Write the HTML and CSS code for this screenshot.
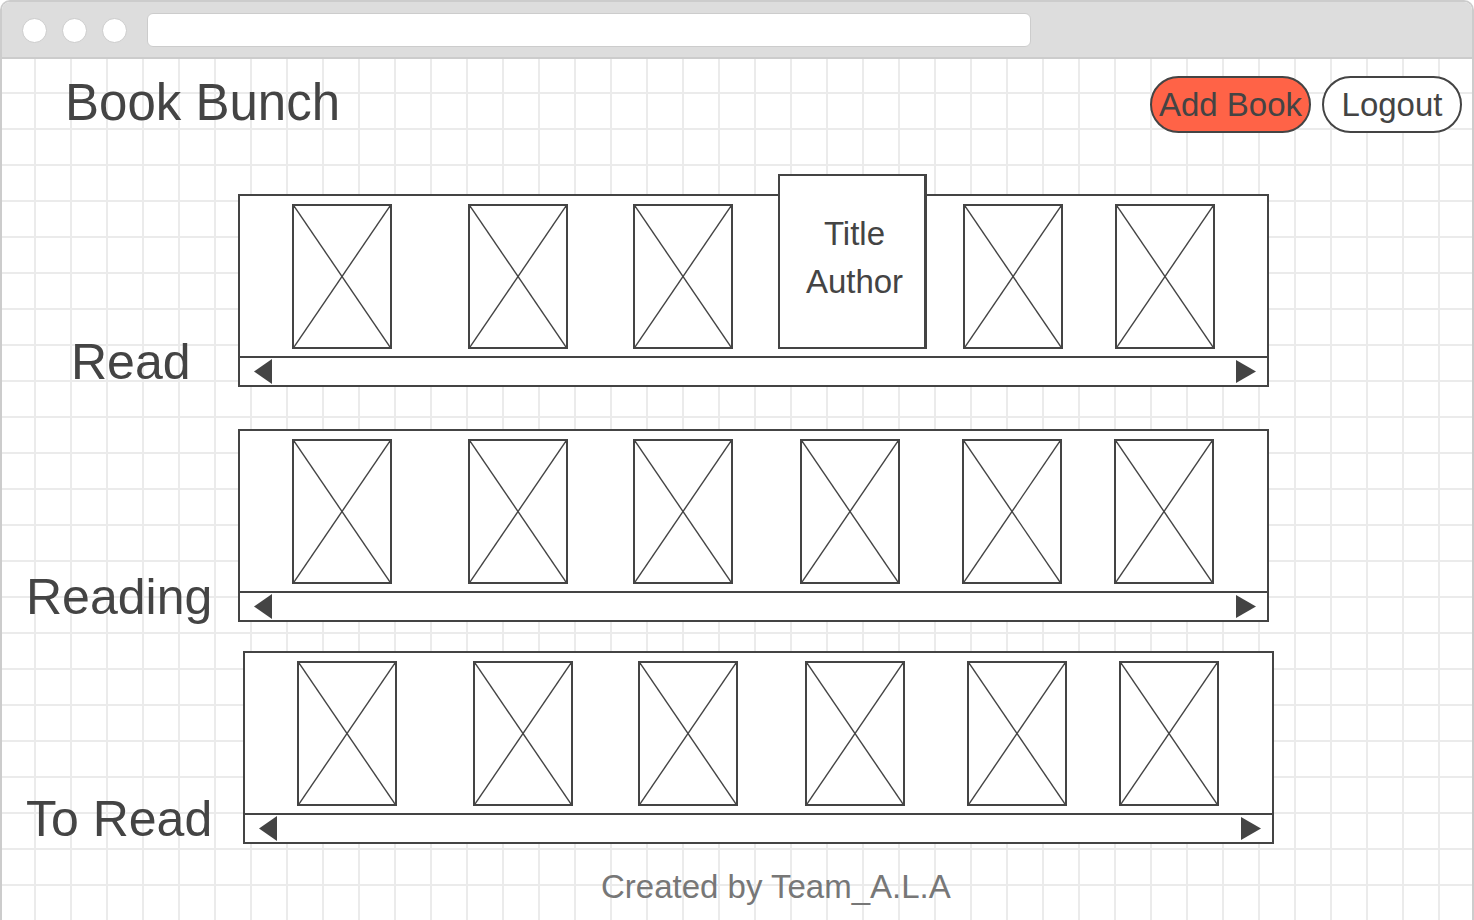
FILE: index.html
```html
<!DOCTYPE html>
<html lang="en">
<head>
<meta charset="utf-8">
<title>Book Bunch</title>
<link rel="stylesheet" href="styles.css">
</head>
<body>
<div class="window">
  <div class="titlebar">
    <span class="dot"></span>
    <span class="dot"></span>
    <span class="dot"></span>
    <div class="address"></div>
  </div>
  <div class="page">
    <header class="header">
      <h1 class="brand">Book Bunch</h1>
      <div class="actions">
        <button class="btn btn-add">Add Book</button>
        <button class="btn btn-logout">Logout</button>
      </div>
    </header>

    <main class="shelves">
      <section class="shelf shelf-read">
        <h2 class="shelf-label">Read</h2>
        <div class="shelf-box">
          <div class="shelf-items">
            <div class="cover"><svg viewBox="0 0 96 141" preserveAspectRatio="none"><line x1="0" y1="0" x2="96" y2="141"/><line x1="96" y1="0" x2="0" y2="141"/></svg></div>
            <div class="cover"><svg viewBox="0 0 96 141" preserveAspectRatio="none"><line x1="0" y1="0" x2="96" y2="141"/><line x1="96" y1="0" x2="0" y2="141"/></svg></div>
            <div class="cover"><svg viewBox="0 0 96 141" preserveAspectRatio="none"><line x1="0" y1="0" x2="96" y2="141"/><line x1="96" y1="0" x2="0" y2="141"/></svg></div>
            <div class="book-card"><span>Title</span><span>Author</span></div>
            <div class="cover"><svg viewBox="0 0 96 141" preserveAspectRatio="none"><line x1="0" y1="0" x2="96" y2="141"/><line x1="96" y1="0" x2="0" y2="141"/></svg></div>
            <div class="cover"><svg viewBox="0 0 96 141" preserveAspectRatio="none"><line x1="0" y1="0" x2="96" y2="141"/><line x1="96" y1="0" x2="0" y2="141"/></svg></div>
          </div>
          <div class="scrollbar">
            <svg class="arrow arrow-left" viewBox="0 0 18 25"><polygon points="18,0 0,12.5 18,25"/></svg>
            <svg class="arrow arrow-right" viewBox="0 0 20 23"><polygon points="0,0 20,11.5 0,23"/></svg>
          </div>
        </div>
      </section>

      <section class="shelf shelf-reading">
        <h2 class="shelf-label">Reading</h2>
        <div class="shelf-box">
          <div class="shelf-items">
            <div class="cover"><svg viewBox="0 0 96 141" preserveAspectRatio="none"><line x1="0" y1="0" x2="96" y2="141"/><line x1="96" y1="0" x2="0" y2="141"/></svg></div>
            <div class="cover"><svg viewBox="0 0 96 141" preserveAspectRatio="none"><line x1="0" y1="0" x2="96" y2="141"/><line x1="96" y1="0" x2="0" y2="141"/></svg></div>
            <div class="cover"><svg viewBox="0 0 96 141" preserveAspectRatio="none"><line x1="0" y1="0" x2="96" y2="141"/><line x1="96" y1="0" x2="0" y2="141"/></svg></div>
            <div class="cover"><svg viewBox="0 0 96 141" preserveAspectRatio="none"><line x1="0" y1="0" x2="96" y2="141"/><line x1="96" y1="0" x2="0" y2="141"/></svg></div>
            <div class="cover"><svg viewBox="0 0 96 141" preserveAspectRatio="none"><line x1="0" y1="0" x2="96" y2="141"/><line x1="96" y1="0" x2="0" y2="141"/></svg></div>
            <div class="cover"><svg viewBox="0 0 96 141" preserveAspectRatio="none"><line x1="0" y1="0" x2="96" y2="141"/><line x1="96" y1="0" x2="0" y2="141"/></svg></div>
          </div>
          <div class="scrollbar">
            <svg class="arrow arrow-left" viewBox="0 0 18 25"><polygon points="18,0 0,12.5 18,25"/></svg>
            <svg class="arrow arrow-right" viewBox="0 0 20 23"><polygon points="0,0 20,11.5 0,23"/></svg>
          </div>
        </div>
      </section>

      <section class="shelf shelf-toread">
        <h2 class="shelf-label">To Read</h2>
        <div class="shelf-box">
          <div class="shelf-items">
            <div class="cover"><svg viewBox="0 0 96 141" preserveAspectRatio="none"><line x1="0" y1="0" x2="96" y2="141"/><line x1="96" y1="0" x2="0" y2="141"/></svg></div>
            <div class="cover"><svg viewBox="0 0 96 141" preserveAspectRatio="none"><line x1="0" y1="0" x2="96" y2="141"/><line x1="96" y1="0" x2="0" y2="141"/></svg></div>
            <div class="cover"><svg viewBox="0 0 96 141" preserveAspectRatio="none"><line x1="0" y1="0" x2="96" y2="141"/><line x1="96" y1="0" x2="0" y2="141"/></svg></div>
            <div class="cover"><svg viewBox="0 0 96 141" preserveAspectRatio="none"><line x1="0" y1="0" x2="96" y2="141"/><line x1="96" y1="0" x2="0" y2="141"/></svg></div>
            <div class="cover"><svg viewBox="0 0 96 141" preserveAspectRatio="none"><line x1="0" y1="0" x2="96" y2="141"/><line x1="96" y1="0" x2="0" y2="141"/></svg></div>
            <div class="cover"><svg viewBox="0 0 96 141" preserveAspectRatio="none"><line x1="0" y1="0" x2="96" y2="141"/><line x1="96" y1="0" x2="0" y2="141"/></svg></div>
          </div>
          <div class="scrollbar">
            <svg class="arrow arrow-left" viewBox="0 0 18 25"><polygon points="18,0 0,12.5 18,25"/></svg>
            <svg class="arrow arrow-right" viewBox="0 0 20 23"><polygon points="0,0 20,11.5 0,23"/></svg>
          </div>
        </div>
      </section>
    </main>

    <footer class="footer">Created by Team_A.L.A</footer>
  </div>
</div>
</body>
</html>
```

FILE: styles.css
```css
* {
  box-sizing: border-box;
}

html, body {
  margin: 0;
  padding: 0;
  background: #ffffff;
}

body {
  font-family: "Liberation Sans", Arial, sans-serif;
  color: #444444;
}

.window {
  width: 1474px;
  height: 920px;
  border: 2px solid #cccccc;
  border-bottom: none;
  border-radius: 10px 10px 0 0;
  overflow: hidden;
  display: flex;
  flex-direction: column;
}

/* ---------- browser chrome ---------- */
.titlebar {
  flex: none;
  height: 57px;
  background: #dddddd;
  border-bottom: 2px solid #cccccc;
  display: flex;
  align-items: flex-start;
  padding-left: 20px;
}

.dot {
  width: 25px;
  height: 25px;
  margin-top: 16px;
  margin-right: 15px;
  border-radius: 50%;
  background: #ffffff;
  border: 1px solid #cccccc;
}

.dot:nth-child(3) {
  margin-right: 20px;
}

.address {
  width: 884px;
  height: 34px;
  margin-top: 11px;
  background: #ffffff;
  border: 1px solid #cccccc;
  border-radius: 6px;
}

/* ---------- page ---------- */
.page {
  flex: 1;
  background-color: #ffffff;
  background-image:
    linear-gradient(to right, #ebebeb 2px, transparent 2px),
    linear-gradient(to bottom, #ebebeb 2px, transparent 2px);
  background-size: 36px 36px;
  background-position: 32px 33px;
}

.header {
  display: flex;
  justify-content: space-between;
  align-items: flex-start;
  height: 74px;
  padding: 17px 10px 0 63px;
}

.brand {
  margin: 2px 0 0 0;
  font-size: 51px;
  line-height: 50px;
  font-weight: normal;
  color: #444444;
}

.actions {
  display: flex;
  gap: 11px;
}

.btn {
  height: 57px;
  padding: 0;
  border: 2px solid #444444;
  border-radius: 29px;
  font-family: "Liberation Sans", Arial, sans-serif;
  font-size: 33px;
  line-height: 53px;
  color: #444444;
  text-align: center;
  white-space: nowrap;
  cursor: pointer;
}

.btn-add {
  width: 161px;
  background: #ff6347;
}

.btn-logout {
  width: 140px;
  background: #ffffff;
}

/* ---------- shelves ---------- */
.shelves {
  display: flex;
  flex-direction: column;
}

.shelf {
  display: flex;
  align-items: flex-end;
}

.shelf-read {
  margin-top: 61px;
}

.shelf-reading {
  margin-top: 42px;
}

.shelf-toread {
  margin-top: 29px;
}

.shelf-label {
  flex: none;
  width: 236px;
  margin: 0;
  font-size: 50px;
  line-height: 50px;
  font-weight: normal;
  color: #444444;
  white-space: nowrap;
}

.shelf-read .shelf-label {
  padding-left: 69px;
}

.shelf-reading .shelf-label {
  padding-left: 24px;
}

.shelf-toread .shelf-label {
  width: 241px;
  padding-left: 24px;
}

.shelf-box {
  flex: none;
  width: 1031px;
  height: 193px;
  border: 2px solid #444444;
  background: #ffffff;
  display: flex;
  flex-direction: column;
}

.shelf-items {
  flex: none;
  height: 160px;
  padding-bottom: 7px;
  display: flex;
  align-items: flex-end;
}

.cover {
  flex: none;
  width: 100px;
  height: 145px;
  border: 2px solid #444444;
  background: #ffffff;
}

.cover svg {
  display: block;
  width: 100%;
  height: 100%;
}

.cover line {
  stroke: #444444;
  stroke-width: 1.4;
  vector-effect: non-scaling-stroke;
}

.shelf-items > :nth-child(1) { margin-left: 52px; }
.shelf-items > :nth-child(2) { margin-left: 76px; }
.shelf-items > :nth-child(3) { margin-left: 65px; }
.shelf-items > :nth-child(4) { margin-left: 67px; }
.shelf-items > :nth-child(5) { margin-left: 62px; }
.shelf-items > :nth-child(6) { margin-left: 52px; }

.shelf-read .shelf-items > :nth-child(4) { margin-left: 45px; }
.shelf-read .shelf-items > :nth-child(5) { margin-left: 36px; }

.book-card {
  flex: none;
  width: 149px;
  height: 175px;
  border: 2px solid #444444;
  border-right-width: 3px;
  background: #ffffff;
  padding: 34px 0 0 5px;
  display: flex;
  flex-direction: column;
  align-items: center;
  font-size: 33px;
  line-height: 48px;
  color: #444444;
}

.scrollbar {
  flex: 1;
  border-top: 2px solid #444444;
  display: flex;
  justify-content: space-between;
  align-items: center;
}

.arrow polygon {
  fill: #444444;
}

.arrow-left {
  width: 18px;
  height: 25px;
  margin-left: 14px;
}

.arrow-right {
  width: 20px;
  height: 23px;
  margin-right: 11px;
}

/* ---------- footer ---------- */
.footer {
  margin-top: 24px;
  padding-left: 599px;
  font-size: 33px;
  line-height: 37px;
  color: #777777;
}
```
